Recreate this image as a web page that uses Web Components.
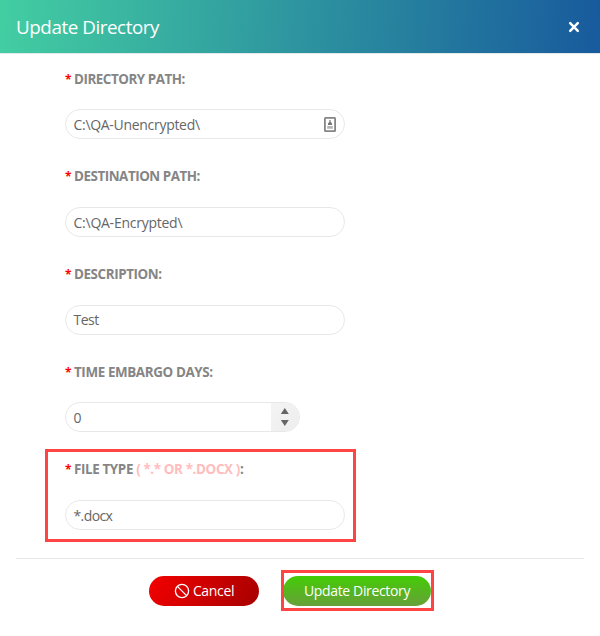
<!DOCTYPE html>
<html lang="en">
<head>
<meta charset="utf-8">
<title>Update Directory</title>
<style>
html,body{margin:0;height:100%;background:#fff;overflow:hidden}
body{font-family:"Open Sans","Noto Sans",sans-serif}
</style>
</head>
<body>
<update-dialog></update-dialog>
<script>
const define = (name, html) => customElements.define(name, class extends HTMLElement {
  connectedCallback() {
    if (this.shadowRoot) return;
    const t = document.createElement('template');
    t.innerHTML = html;
    this.attachShadow({mode: 'open'}).append(t.content.cloneNode(true));
  }
});

define('dialog-header', `<style>
:host{display:flex;align-items:center;justify-content:space-between;flex:none;box-sizing:border-box;height:54px;padding:0 20px 0 16px;border-bottom:1px solid #e3e8ea;background:linear-gradient(94deg,#43cea2 0%,#185a9d 100%) padding-box;color:#fff}
h1{margin:0;font-size:18.8px;font-weight:400;line-height:26px;white-space:nowrap;letter-spacing:-.43px}
svg{display:block}
</style><h1><slot></slot></h1>
<svg width="12" height="12" viewBox="0 0 12 12" aria-label="Close"><path d="M2.2 2.2 9.8 9.8M9.8 2.2 2.2 9.8" stroke="#fff" stroke-width="2.5" stroke-linecap="round"/></svg>`);

define('form-field', `<style>
:host{display:block;flex:none;height:97.7px;width:280px}
.label{font-size:13.4px;font-weight:700;line-height:20px;color:#858585;white-space:nowrap;display:flex}
.star{color:#f00;width:9px;flex:none;font-size:12px;line-height:21px;height:20px}
.text{letter-spacing:var(--label-ls,-.46px);white-space:pre}
.control{margin-top:20.65px}
</style><div class="label"><span class="star">*</span><span class="text"><slot name="label"></slot></span></div><div class="control"><slot></slot></div>`);

define('text-input', `<style>
:host{display:flex;align-items:center;justify-content:space-between;box-sizing:border-box;height:30px;border:1px solid #e8e8e8;border-radius:15px;padding:0 8px 0 7.5px;background:#fff;color:#666;overflow:hidden}
.value{font-size:14px;line-height:20px;white-space:nowrap;letter-spacing:var(--ls,-.3px);padding-top:1.3px}
</style><span class="value"><slot></slot></span><slot name="end"></slot>`);

define('credential-icon', `<style>:host{display:block}svg{display:block}</style>
<svg width="12" height="15" viewBox="0 0 12 15"><rect x=".9" y=".9" width="10.2" height="13.2" rx=".6" fill="#fff" stroke="#858585" stroke-width="1.8"/><path d="M6 3v2" stroke="#888" stroke-width="1.4"/><path d="M4 8V6.5L5.2 5h1.6L8 6.5V8z" fill="#777"/><path d="M3.2 9h5.6v2.8H3.2z" fill="#b4b4b4"/></svg>`);

define('step-arrows', `<style>
:host{display:flex;align-items:center;justify-content:center;width:28px;height:28px;margin-right:-8px;background:linear-gradient(135deg,#f4f4f4,#ededed)}
svg{display:block}
</style><svg width="28" height="28" viewBox="0 0 28 28"><path d="M9.8 11 13.8 5 17.8 11zM9.8 17 13.8 23 17.8 17z" fill="#666"/></svg>`);

define('red-outline', `<style>
:host{display:block;flex:none;position:relative;width:fit-content}
i{position:absolute;inset:var(--inset);border:3px solid #ff4444;pointer-events:none}
</style><slot></slot><i></i>`);

define('pill-button', `<style>
:host{display:flex;align-items:center;justify-content:center;box-sizing:border-box;height:30px;width:var(--w);border-radius:15px;background:var(--bg);color:#fff}
.t{font-size:14px;line-height:20px;letter-spacing:-.35px;white-space:nowrap}
::slotted(svg){display:block;margin-right:3px}
</style><slot name="icon"></slot><span class="t"><slot></slot></span>`);

define('update-dialog', `<style>
:host{display:flex;flex-direction:column;height:636px;width:600px;background:#fff}
main{display:flex;flex-direction:column;flex:none;padding:14.6px 0 0 65px;height:489px;box-sizing:border-box}
footer{display:flex;flex:none;justify-content:center;margin:15px 16px 0;padding:17px 20px 0 0;border-top:1px solid #e8e8e8;gap:24px}
.hint{color:#ffbdbd}
</style>
<dialog-header>Update Directory</dialog-header>
<main>
<form-field><span slot="label">DIRECTORY PATH:</span><text-input>C:\\QA-Unencrypted\\<credential-icon slot="end"></credential-icon></text-input></form-field>
<form-field><span slot="label">DESTINATION PATH:</span><text-input style="--ls:-.25px">C:\\QA-Encrypted\\</text-input></form-field>
<form-field style="--label-ls:-.4px"><span slot="label">DESCRIPTION:</span><text-input style="--ls:-.5px">Test</text-input></form-field>
<form-field style="--label-ls:-.38px"><span slot="label">TIME EMBARGO DAYS:</span><text-input style="width:235px">0<step-arrows slot="end"></step-arrows></text-input></form-field>
<red-outline style="--inset:-10.4px -11px 15.1px -20px"><form-field style="--label-ls:-.37px"><span slot="label">FILE TYPE <span class="hint">( *.* OR *.DOCX )</span>:</span><text-input style="--ls:-.6px">*.docx</text-input></form-field></red-outline>
</main>
<footer>
<pill-button style="--w:110px;--bg:linear-gradient(120deg,#f40000,#a60000)"><svg slot="icon" width="16" height="16" viewBox="0 0 16 16"><circle cx="8" cy="8" r="6.6" fill="none" stroke="#fff" stroke-width="1.3"/><path d="M3.4 3.4 12.6 12.6" stroke="#fff" stroke-width="1.3"/></svg>Cancel</pill-button>
<red-outline style="--inset:-6px -3px -5px -2px"><pill-button style="--w:148px;--bg:linear-gradient(#43cc05,#67a03a)">Update Directory</pill-button></red-outline>
</footer>`);
</script>
</body>
</html>
